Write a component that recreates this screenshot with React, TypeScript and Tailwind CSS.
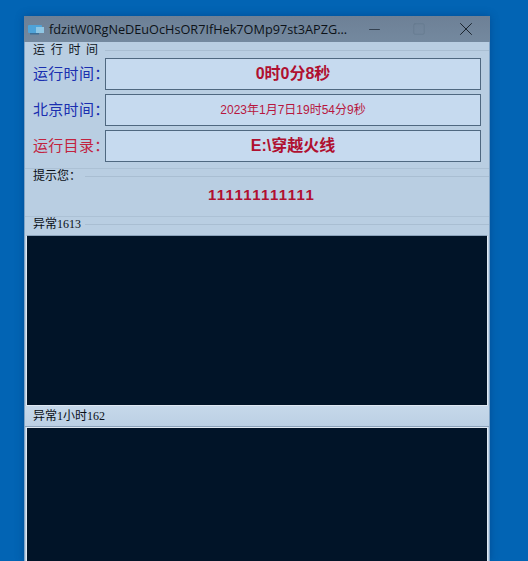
import { Minus, Square, X } from "lucide-react";

const cjk = "font-['Liberation_Sans','Noto_Sans_CJK_SC',sans-serif]";
const simsun = "font-['Liberation_Serif','Noto_Sans_CJK_SC',serif]";

function InfoRow({ label, labelClass, valueClass, value }: { label: string; labelClass: string; valueClass: string; value: string }) {
  return (
    <div className="flex h-[32px] items-center">
      <div className={`w-[80px] pb-[2px] pl-[8px] text-[15px] leading-none tracking-[0.3px] whitespace-nowrap ${labelClass}`}>{label}</div>
      <div className={`flex h-[32px] w-[376px] items-center justify-center border border-[#4f6880] bg-[#c6daef] ${valueClass}`}>{value}</div>
    </div>
  );
}

function SectionTitle({ text }: { text: string }) {
  return (
    <div className="flex items-center">
      <span className={`pl-[8px] pr-[4px] text-[12px] leading-none whitespace-nowrap text-[#0a0f16] ${simsun}`}>{text}</span>
      <div className="h-px flex-1 bg-[#a9bed2]" />
    </div>
  );
}

export default function App() {
  return (
    <div className={`h-[561px] w-[528px] overflow-hidden bg-[#0264b4] pt-[16px] pl-[24px] ${cjk}`}>
      <div className="h-[545px] w-[466px] overflow-hidden shadow-[0_0_8px_rgba(0,50,110,0.45)]">
        <div className="flex h-[26px] items-center bg-[linear-gradient(#6d8096,#74899f)] pl-[4px]">
          <svg width="16" height="14" viewBox="0 0 16 14" className="shrink-0">
            <rect x="0" y="3" width="14" height="8" rx="1" fill="#4fa3d8" />
            <rect x="8" y="5" width="8" height="6" fill="#8fc6e4" />
            <rect x="2" y="11" width="9" height="1.5" fill="#3d6f96" />
          </svg>
          <span className="ml-[5px] w-[300px] text-[12.7px] leading-none whitespace-nowrap text-[#0c1218] font-['Open_Sans',sans-serif]">fdzitW0RgNeDEuOcHsOR7IfHek7OMp97st3APZG...</span>
          <Minus className="ml-[17px] text-[#1b2530]" size={17} strokeWidth={1} />
          <Square className="ml-[29px] text-[#63778c]" size={14} strokeWidth={1} />
          <X className="ml-[29px] text-[#141c25]" size={22} strokeWidth={1} />
        </div>

        <div className="h-[519px] overflow-hidden border-x border-[#7fa3c6] bg-[#b9cee2]">
          <div className="flex h-[16px] items-center">
            <span className="pl-[8px] pr-[1px] text-[12px] leading-none tracking-[5.7px] whitespace-nowrap text-[#10161e]">运行时间</span>
            <div className="h-px flex-1 bg-[#a9bed2]" />
          </div>

          <div className="flex flex-col gap-[4px]">
            <InfoRow label="运行时间：" labelClass="text-[#1a2fb0]" valueClass="text-[16px] font-bold text-[#b01030]" value="0时0分8秒" />
            <InfoRow label="北京时间：" labelClass="text-[#1a2fb0]" valueClass="text-[12px] text-[#b8163e]" value="2023年1月7日19时54分9秒" />
            <InfoRow label="运行目录：" labelClass="text-[#c2233f]" valueClass="text-[16px] font-bold text-[#b01030]" value="E:\穿越火线" />
          </div>

          <div className="mt-[6px] border-t border-[#acc1d5] pt-[1px]">
            <SectionTitle text="提示您：" />
            <div className="mt-[4px] pl-[9px] text-center text-[15px] leading-[18px] font-bold tracking-[1.35px] text-[#b01030]">111111111111</div>
          </div>

          <div className="mt-[12px] h-[19px] border-t border-[#acc1d5] pt-[1px]">
            <SectionTitle text="异常1613" />
          </div>

          <div className="mx-[1px] h-[171px] border border-t-[#8ba3bb] border-r-[#dfe8f2] border-b-[#dfe8f2] border-l-[#dfe8f2] bg-[#011428]" />

          <div className={`flex h-[21px] items-center border-b border-[#8ba3bb] bg-[linear-gradient(#c6d8ea,#bcd0e4)] pl-[8px] text-[12px] leading-none text-[#0a0f16] ${simsun}`}>
            异常1小时162
          </div>

          <div className="mx-[1px] h-[140px] border border-[#dfe8f2] bg-[#011428]" />
        </div>
      </div>
    </div>
  );
}
